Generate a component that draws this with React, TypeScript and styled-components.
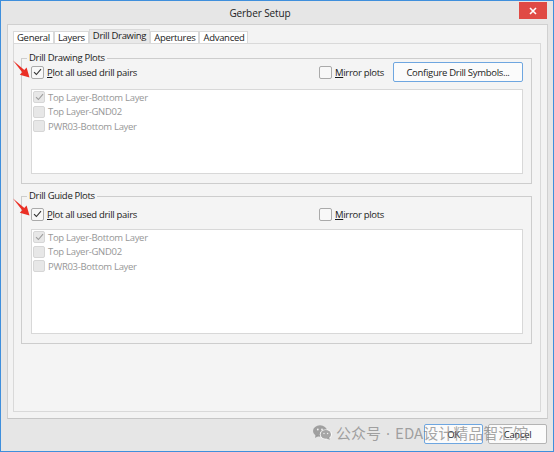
import React from 'react';
import styled, { createGlobalStyle } from 'styled-components';

const GlobalStyle = createGlobalStyle`
  html, body {
    margin: 0;
    padding: 0;
    background: #ffffff;
  }
  * {
    box-sizing: border-box;
  }
  body {
    font-family: "Open Sans", "Noto Sans", sans-serif;
    font-size: 9.5px;
    letter-spacing: -0.3px;
    color: #1b1b1b;
  }
`;

const Window = styled.div`
  position: relative;
  width: 554px;
  height: 452px;
  border: 1px solid #3f8fdc;
  background: #e6e6e6;
  display: flex;
  flex-direction: column;
  overflow: hidden;
`;

const TitleBar = styled.div`
  height: 23px;
  display: flex;
  align-items: center;
`;

const Title = styled.div`
  flex: 1;
  text-align: center;
  font-size: 10px;
  letter-spacing: -0.1px;
  color: #222;
`;

const CloseButton = styled.div`
  align-self: flex-start;
  margin: 1px 6px 0 0;
  width: 28px;
  height: 17px;
  background: #e04a44;
  color: #fff;
  display: flex;
  align-items: center;
  justify-content: center;
`;

const TabControl = styled.div`
  margin: 0 5px 0 6px;
  height: 395px;
  border: 1px solid #d0d0d0;
  border-bottom-color: #c6c6c6;
  background: #f3f3f3;
  padding: 5px 6px 6px 5px;
  display: flex;
  flex-direction: column;
`;

const TabStrip = styled.div`
  display: flex;
  align-items: flex-end;
  height: 13px;
`;

const Tab = styled.div<{ $active?: boolean }>`
  height: ${(p) => (p.$active ? 14 : 12)}px;
  padding: 0 3px;
  border: 1px solid #d9d9d9;
  border-bottom: none;
  background: ${(p) => (p.$active ? '#e9e9e9' : '#ffffff')};
  line-height: 11px;
  white-space: nowrap;
`;

const TabPage = styled.div`
  flex: 1;
  border: 1px solid #d9d9d9;
  background: #f4f4f4;
  padding: 14px 8px 0 7px;
`;

const Group = styled.div<{ $padTop: number; $gapAbove?: number }>`
  position: relative;
  border: 1px solid #cdcdcd;
  margin-top: ${(p) => p.$gapAbove ?? 0}px;
  padding: ${(p) => p.$padTop}px 8px 9px 9px;
`;

const Legend = styled.div`
  position: absolute;
  top: -8px;
  left: 5px;
  padding: 0 2px;
  line-height: 13px;
  background: #f4f4f4;
`;

const HeaderRow = styled.div`
  display: grid;
  grid-template-columns: 288px auto 1fr;
  align-items: center;
  height: 20px;
`;

const CheckLabel = styled.label`
  display: flex;
  align-items: center;
  gap: 3px;
  white-space: nowrap;
`;

const Box = styled.span<{ $disabled?: boolean }>`
  width: ${(p) => (p.$disabled ? 12 : 13)}px;
  height: ${(p) => (p.$disabled ? 12 : 13)}px;
  border: 1px solid ${(p) => (p.$disabled ? '#d6d6d6' : '#aaaaaa')};
  border-radius: 2px;
  background: ${(p) => (p.$disabled ? '#e7e7e7' : '#f8f8f8')};
  display: flex;
  align-items: center;
  justify-content: center;
  flex: none;
`;

const AccessKey = styled.span`
  text-decoration: underline;
`;

const PushButton = styled.button<{ $default?: boolean; $width: number }>`
  justify-self: end;
  width: ${(p) => p.$width}px;
  height: 20px;
  border: 1px solid ${(p) => (p.$default ? '#6ea6e0' : '#b4b4b4')};
  border-radius: 2px;
  background: #fbfbfb;
  font: inherit;
  letter-spacing: inherit;
  color: #1b1b1b;
  padding: 0;
`;

const List = styled.div<{ $height: number; $gap: number }>`
  margin-top: ${(p) => p.$gap}px;
  height: ${(p) => p.$height}px;
  border: 1px solid #d8d8d8;
  background: #ffffff;
  padding: 0 1px;
`;

const ListRow = styled.div`
  height: 14.5px;
  display: flex;
  align-items: center;
  gap: 3px;
  color: #979797;
`;

const BottomBar = styled.div`
  flex: 1;
  display: flex;
  justify-content: flex-end;
  align-items: flex-start;
  gap: 5px;
  padding: 5px 6px 0 0;
`;

const Watermark = styled.div`
  position: absolute;
  left: 312px;
  top: 421px;
  display: flex;
  align-items: center;
  gap: 4px;
  font-family: "Noto Sans CJK SC", sans-serif;
  font-size: 15px;
  letter-spacing: 0;
  color: rgba(128, 128, 128, 0.7);
  pointer-events: none;
  white-space: nowrap;
`;

const Dot = styled.span`
  font-family: "Noto Sans", sans-serif;
  margin: 0 5px;
`;

const ArrowMark = styled.svg<{ $top: number }>`
  position: absolute;
  left: 8px;
  top: ${(p) => p.$top}px;
`;

function Check({ color = '#333' }: { color?: string }) {
  return (
    <svg width="9" height="8" viewBox="0 0 9 8">
      <path d="M1 4.2 L3.4 6.5 L8 1.2" fill="none" stroke={color} strokeWidth="1.1" />
    </svg>
  );
}

function Arrow({ top }: { top: number }) {
  return (
    <ArrowMark $top={top} width="24" height="22" viewBox="0 0 24 22">
      <polygon points="4,1.5 15.6,11.2 13.4,13.6" fill="#ea2f25" />
      <polygon points="20.5,18.5 10.8,15.8 17.6,8.6" fill="#ea2f25" />
    </ArrowMark>
  );
}

function WeChatIcon() {
  return (
    <svg width="19" height="15" viewBox="0 0 19 15">
      <ellipse cx="7" cy="6" rx="7" ry="5.8" fill="currentColor" />
      <polygon points="2.5,10 2,13 5.5,11" fill="currentColor" />
      <ellipse cx="12.8" cy="9.4" rx="6" ry="5" fill="#fff" />
      <ellipse cx="12.8" cy="9.4" rx="5.2" ry="4.3" fill="currentColor" />
      <polygon points="16,12.5 17,14.8 13.5,13.4" fill="currentColor" />
      <circle cx="4.8" cy="4.5" r="0.9" fill="#f0f0f0" />
      <circle cx="9" cy="4.5" r="0.9" fill="#f0f0f0" />
      <circle cx="11" cy="8.5" r="0.7" fill="#f0f0f0" />
      <circle cx="14.6" cy="8.5" r="0.7" fill="#f0f0f0" />
    </svg>
  );
}

const pairs = [
  { name: 'Top Layer-Bottom Layer', checked: true },
  { name: 'Top Layer-GND02', checked: false },
  { name: 'PWR03-Bottom Layer', checked: false },
];

const tabs = ['General', 'Layers', 'Drill Drawing', 'Apertures', 'Advanced'];

function PairList({ height, gap }: { height: number; gap: number }) {
  return (
    <List $height={height} $gap={gap}>
      {pairs.map((p) => (
        <ListRow key={p.name}>
          <Box $disabled>{p.checked && <Check color="#9d9d9d" />}</Box>
          {p.name}
        </ListRow>
      ))}
    </List>
  );
}

function PlotOptions() {
  return (
    <>
      <CheckLabel>
        <Box>
          <Check />
        </Box>
        <span>
          <AccessKey>P</AccessKey>lot all used drill pairs
        </span>
      </CheckLabel>
      <CheckLabel>
        <Box />
        <span>
          <AccessKey>M</AccessKey>irror plots
        </span>
      </CheckLabel>
    </>
  );
}

export default function App() {
  return (
    <>
      <GlobalStyle />
      <Window>
        <TitleBar>
          <Title>Gerber Setup</Title>
          <CloseButton>
            <svg width="8" height="8" viewBox="0 0 8 8">
              <path d="M1 1 L7 7 M7 1 L1 7" stroke="#fff" strokeWidth="1.6" />
            </svg>
          </CloseButton>
        </TitleBar>

        <TabControl>
          <TabStrip>
            {tabs.map((t) => (
              <Tab key={t} $active={t === 'Drill Drawing'}>
                {t}
              </Tab>
            ))}
          </TabStrip>
          <TabPage>
            <Group $padTop={3}>
              <Legend>Drill Drawing Plots</Legend>
              <HeaderRow>
                <PlotOptions />
                <PushButton $default $width={130}>
                  Configure Drill Symbols...
                </PushButton>
              </HeaderRow>
              <PairList height={85} gap={7} />
            </Group>

            <Group $padTop={7} $gapAbove={12}>
              <Legend>Drill Guide Plots</Legend>
              <HeaderRow>
                <PlotOptions />
              </HeaderRow>
              <PairList height={105} gap={5} />
            </Group>
          </TabPage>
        </TabControl>

        <BottomBar>
          <PushButton $default $width={59}>
            OK
          </PushButton>
          <PushButton $width={59}>Cancel</PushButton>
        </BottomBar>

        <Arrow top={58} />
        <Arrow top={196} />

        <Watermark>
          <WeChatIcon />
          <span>
            公众号<Dot>·</Dot>EDA设计精品智汇馆
          </span>
        </Watermark>
      </Window>
    </>
  );
}
